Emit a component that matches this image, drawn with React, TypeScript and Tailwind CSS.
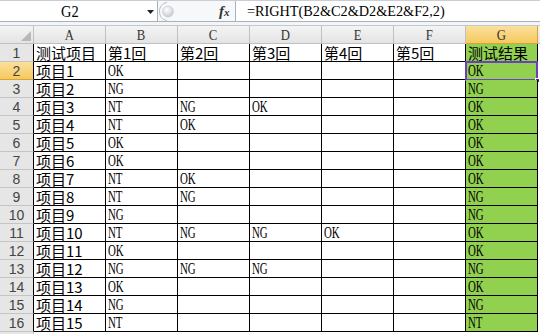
import React from 'react';

const LATIN = /[A-Za-z]/;

function Txt({ s }: { s: string }) {
  if (s === '') return null;
  if (LATIN.test(s)) {
    return (
      <span className="inline-block origin-left scale-x-[0.68] font-['Liberation_Serif',serif] text-[16px] leading-[16px] text-black">
        {s}
      </span>
    );
  }
  return (
    <span className="font-['Noto_Sans_CJK_SC',sans-serif] text-[15px] leading-[16px] text-black">{s}</span>
  );
}

const data: string[][] = [
  ['测试项目', '第1回', '第2回', '第3回', '第4回', '第5回', '测试结果'],
  ['项目1', 'OK', '', '', '', '', 'OK'],
  ['项目2', 'NG', '', '', '', '', 'NG'],
  ['项目3', 'NT', 'NG', 'OK', '', '', 'OK'],
  ['项目4', 'NT', 'OK', '', '', '', 'OK'],
  ['项目5', 'OK', '', '', '', '', 'OK'],
  ['项目6', 'OK', '', '', '', '', 'OK'],
  ['项目7', 'NT', 'OK', '', '', '', 'OK'],
  ['项目8', 'NT', 'NG', '', '', '', 'NG'],
  ['项目9', 'NG', '', '', '', '', 'NG'],
  ['项目10', 'NT', 'NG', 'NG', 'OK', '', 'OK'],
  ['项目11', 'OK', '', '', '', '', 'OK'],
  ['项目12', 'NG', 'NG', 'NG', '', '', 'NG'],
  ['项目13', 'OK', '', '', '', '', 'OK'],
  ['项目14', 'NG', '', '', '', '', 'NG'],
  ['项目15', 'NT', '', '', '', '', 'NT'],
];

const cols = ['A', 'B', 'C', 'D', 'E', 'F', 'G'];

export default function App() {
  return (
    <div className="w-[540px] h-[334px] overflow-hidden bg-white flex flex-col">
      {/* formula bar */}
      <div className="h-[22px] flex bg-[#e9ecf0] border-t border-[#c9ced6] shrink-0">
        <div className="w-[158px] h-[21px] bg-white border-r border-b border-[#a9b1bc] relative flex items-center">
          <div className="flex-1 text-center pr-[18px]">
            <span className="inline-block scale-x-[0.9] font-['Liberation_Serif',serif] text-[16px] leading-[16px] text-black">
              G2
            </span>
          </div>
          <svg className="absolute left-[147px] top-[9px]" width="7" height="4" viewBox="0 0 7 4">
            <path d="M0 0 H7 L3.5 4 Z" fill="#222" />
          </svg>
        </div>
        <div className="w-[78px] h-[21px] flex items-center bg-[#f7f8f9] border-r border-b border-[#a9b1bc] relative">
          <svg className="absolute left-[1px] top-[1px]" width="18" height="19" viewBox="0 0 18 19">
            <defs>
              <radialGradient id="g1" cx="0.4" cy="0.35" r="0.7">
                <stop offset="0" stopColor="#ffffff" />
                <stop offset="1" stopColor="#c4c8cd" />
              </radialGradient>
            </defs>
            <path d="M8 0.5 C3 1 0.5 5 0.5 9.5 C0.5 14 3 18 8 18.5" fill="none" stroke="#b6bcc4" strokeWidth="1" />
            <circle cx="9" cy="9.5" r="5.5" fill="url(#g1)" stroke="#c4c9cf" strokeWidth="0.6" />
          </svg>
          <div className="absolute left-[61px] top-[1px] font-['Liberation_Serif',serif] italic font-bold text-[15px] leading-[18px] text-[#333]">
            f<span className="text-[11px]">x</span>
          </div>
        </div>
        <div className="flex-1 h-[21px] bg-white border-b border-[#a9b1bc] flex items-center pl-[11px]">
          <span className="inline-block origin-left scale-x-[0.95] font-['Liberation_Serif',serif] text-[15px] leading-[16px] text-black whitespace-nowrap">
            =RIGHT(B2&amp;C2&amp;D2&amp;E2&amp;F2,2)
          </span>
        </div>
      </div>
      <div className="h-[4px] bg-[#f3f4f6] border-b border-[#c3c8cf] shrink-0" />

      {/* column header */}
      <div className="flex h-[18px] shrink-0">
        <div className="w-[34px] h-[18px] bg-gradient-to-b from-[#f4f4f4] to-[#e4e4e4] border-r border-b border-[#c0c0c0] relative">
          <svg className="absolute right-[2px] bottom-[2px]" width="10" height="10" viewBox="0 0 10 10">
            <path d="M10 0 V10 H0 Z" fill="#b8b8b8" />
          </svg>
        </div>
        {cols.map((c) => (
          <div
            key={c}
            className={
              c === 'G'
                ? 'w-[72px] h-[18px] bg-gradient-to-b from-[#fbe09a] to-[#f5c95e] border-r border-b border-[#d9a23c] flex items-center justify-center'
                : 'w-[72px] h-[18px] bg-gradient-to-b from-[#f4f4f4] to-[#e4e4e4] border-r border-b border-[#c0c0c0] flex items-center justify-center'
            }
          >
            <span className="inline-block scale-x-[0.85] font-['Liberation_Serif',serif] text-[15px] leading-[16px] text-[#333]">{c}</span>
          </div>
        ))}
        <div className="flex-1 h-[18px] bg-gradient-to-b from-[#f4f4f4] to-[#e4e4e4] border-b border-[#c0c0c0]" />
      </div>

      {/* rows */}
      {data.map((row, ri) => {
        const rn = ri + 1;
        return (
          <div key={ri} className="flex h-[18px] shrink-0">
            <div
              className={
                rn === 2
                  ? 'w-[34px] h-[18px] bg-gradient-to-b from-[#fbe09a] to-[#f5c95e] border-r border-r-black border-b border-b-[#d9a23c] flex items-center justify-center'
                  : 'w-[34px] h-[18px] bg-[#e6e6e6] border-r border-r-black border-b border-b-[#c4c4c4] flex items-center justify-center'
              }
            >
              <span className="font-['Liberation_Sans',sans-serif] text-[14px] leading-[16px] text-[#444]">{rn}</span>
            </div>
            {row.map((v, ci) => (
              <div
                key={ci}
                className={
                  ci === 6
                    ? 'w-[72px] h-[18px] bg-[#92d050] border-r border-b border-black flex items-end pl-[2px] whitespace-nowrap overflow-visible relative'
                    : 'w-[72px] h-[18px] bg-white border-r border-b border-black flex items-end pl-[2px] whitespace-nowrap overflow-hidden'
                }
              >
                <div className="h-[16px] flex items-end">
                  <Txt s={v} />
                </div>
                {ci === 6 && rn === 2 && (
                  <>
                    <div className="absolute left-[-1px] top-[-1px] w-[73px] h-[20px] border-2 border-[#6e3ec0]" />
                    <div className="absolute right-[-3px] bottom-[-4px] w-[5px] h-[5px] bg-[#4a2a88] border border-white" />
                  </>
                )}
              </div>
            ))}
            <div className="flex-1 h-[18px] bg-white" />
          </div>
        );
      })}
      <div className="flex flex-1">
        <div className="w-[34px] bg-[#e6e6e6] border-r border-[#c4c4c4]" />
        <div className="flex-1 bg-white" />
      </div>
    </div>
  );
}
